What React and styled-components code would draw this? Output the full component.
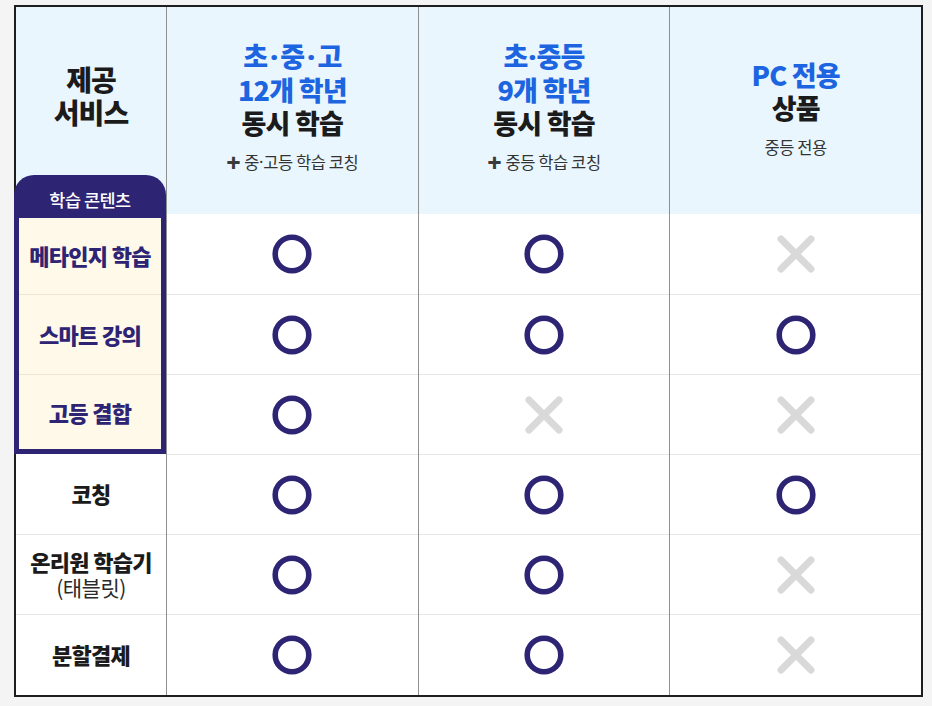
import React from 'react'
import styled, { createGlobalStyle } from 'styled-components'

const GlobalStyle = createGlobalStyle`
  html, body {
    margin: 0;
    padding: 0;
    background: #f4f4f4;
  }
  body {
    font-family: 'Noto Sans CJK KR', 'Noto Sans', sans-serif;
    color: #1b1b1b;
  }
`

const PURPLE = '#2d2474'

const Page = styled.div`
  padding: 5px 0 0 14px;
`

const Table = styled.div`
  display: flex;
  width: 909px;
  height: 692px;
  box-sizing: border-box;
  border: 2px solid #1e1e1e;
  background: #fff;
`

const FirstColumn = styled.div`
  display: flex;
  flex-direction: column;
  width: 150px;
  flex: none;
`

const Column = styled.div`
  display: flex;
  flex-direction: column;
  flex: 1;
  border-left: 1px solid #8f8f8f;
`

const Head = styled.div`
  height: 207px;
  flex: none;
  display: flex;
  flex-direction: column;
  align-items: center;
  background: #eaf6fe;
  padding-top: ${p => p.$top}px;
  box-sizing: border-box;
`

const FirstHead = styled.div`
  height: 207px;
  flex: none;
  display: flex;
  flex-direction: column;
  background: #eaf6fe;
`

const ServiceLabel = styled.div`
  flex: 1;
  text-align: center;
  font-size: 28px;
  font-weight: 900;
  line-height: 33px;
  letter-spacing: -1px;
  padding-top: 56px;
  box-sizing: border-box;
`

const Tab = styled.div`
  height: 39px;
  margin-left: -2px;
  width: 152px;
  flex: none;
  background: ${PURPLE};
  border-radius: 20px 20px 0 0;
  color: #fff;
  font-size: 17.5px;
  font-weight: 500;
  letter-spacing: -0.5px;
  display: flex;
  align-items: center;
  justify-content: center;
  padding-top: 9px;
  box-sizing: border-box;
`

const Group = styled.div`
  margin-left: -2px;
  width: 152px;
  height: 240px;
  flex: none;
  box-sizing: border-box;
  border: 5px solid ${PURPLE};
  border-top-width: 4px;
  background: #fef9e8;
  display: flex;
  flex-direction: column;
`

const Title = styled.div`
  font-size: 27px;
  font-weight: 900;
  line-height: 33px;
  letter-spacing: -0.8px;
  color: ${p => (p.$blue ? '#1d65e0' : '#1b1b1b')};
`

const Dot = styled.span`
  font-family: 'Noto Sans', sans-serif;
  margin: 0 ${p => p.$m ?? 3}px;
`

const Note = styled.div`
  margin-top: ${p => p.$gap}px;
  font-size: 16.5px;
  line-height: 20px;
  letter-spacing: -0.4px;
  color: #333;
  display: flex;
  align-items: center;
`

const Plus = styled.span`
  font-family: 'Noto Sans', sans-serif;
  font-size: 25px;
  font-weight: 800;
  color: #3a3a3a;
  line-height: 20px;
  margin-right: 4px;
`

const Cell = styled.div`
  height: ${p => p.$h || 80}px;
  flex: none;
  box-sizing: border-box;
  display: flex;
  flex-direction: column;
  align-items: center;
  justify-content: center;
  text-align: center;
  border-top: ${p => (p.$line ? `1px solid ${p.$cream ? '#ece6d2' : '#e6e6e6'}` : 'none')};
  padding-bottom: ${p => p.$pb || 0}px;
`

const RowLabel = styled.div`
  font-size: 22px;
  font-weight: 900;
  line-height: 26px;
  letter-spacing: -0.7px;
  color: ${p => (p.$purple ? PURPLE : '#1b1b1b')};
`

const SubLabel = styled.div`
  font-size: 21px;
  font-weight: 400;
  line-height: 26px;
  letter-spacing: -0.5px;
  color: #2a2a2a;
`

function Mark({ ok }) {
  if (ok) {
    return (
      <svg width="40" height="40" viewBox="0 0 40 40">
        <circle cx="20" cy="20" r="16.8" fill="none" stroke={PURPLE} strokeWidth="5.6" />
      </svg>
    )
  }
  return (
    <svg width="40" height="40" viewBox="0 0 40 40">
      <path d="M5 5 L35 35 M35 5 L5 35" stroke="#d9d9d9" strokeWidth="7" strokeLinecap="round" />
    </svg>
  )
}

const rows = [
  { label: '메타인지 학습', marks: [1, 1, 0] },
  { label: '스마트 강의', marks: [1, 1, 1] },
  { label: '고등 결합', marks: [1, 0, 0] },
  { label: '코칭', marks: [1, 1, 1] },
  { label: '온리원 학습기', sub: '(태블릿)', marks: [1, 1, 0] },
  { label: '분할결제', marks: [1, 1, 0] },
]

const columns = [
  {
    top: 32,
    head: (
      <>
        <Title $blue>초<Dot>·</Dot>중<Dot>·</Dot>고</Title>
        <Title $blue>12개 학년</Title>
        <Title>동시 학습</Title>
        <Note $gap={13}><Plus>+</Plus>중<Dot $m={0}>·</Dot>고등 학습 코칭</Note>
      </>
    ),
  },
  {
    top: 32,
    head: (
      <>
        <Title $blue>초<Dot $m={1}>·</Dot>중등</Title>
        <Title $blue>9개 학년</Title>
        <Title>동시 학습</Title>
        <Note $gap={13}><Plus>+</Plus>중등 학습 코칭</Note>
      </>
    ),
  },
  {
    top: 51,
    head: (
      <>
        <Title $blue>PC 전용</Title>
        <Title>상품</Title>
        <Note $gap={13}>중등 전용</Note>
      </>
    ),
  },
]

export default function App() {
  return (
    <Page>
      <GlobalStyle />
      <Table>
        <FirstColumn>
          <FirstHead>
            <ServiceLabel>제공<br />서비스</ServiceLabel>
            <Tab>학습 콘텐츠</Tab>
          </FirstHead>
          <Group>
            <Cell $h={76} $pb={2}><RowLabel $purple>{rows[0].label}</RowLabel></Cell>
            <Cell $line $cream $pb={2}><RowLabel $purple>{rows[1].label}</RowLabel></Cell>
            <Cell $line $cream $h={75}><RowLabel $purple>{rows[2].label}</RowLabel></Cell>
          </Group>
          {rows.slice(3).map((r, i) => (
            <Cell key={r.label} $line={i > 0} $pb={2}>
              <RowLabel>{r.label}</RowLabel>
              {r.sub && <SubLabel>{r.sub}</SubLabel>}
            </Cell>
          ))}
        </FirstColumn>
        {columns.map((c, ci) => (
          <Column key={ci}>
            <Head $top={c.top}>{c.head}</Head>
            {rows.map((r, ri) => (
              <Cell key={ri} $line={ri > 0}>
                <Mark ok={r.marks[ci]} />
              </Cell>
            ))}
          </Column>
        ))}
      </Table>
    </Page>
  )
}
